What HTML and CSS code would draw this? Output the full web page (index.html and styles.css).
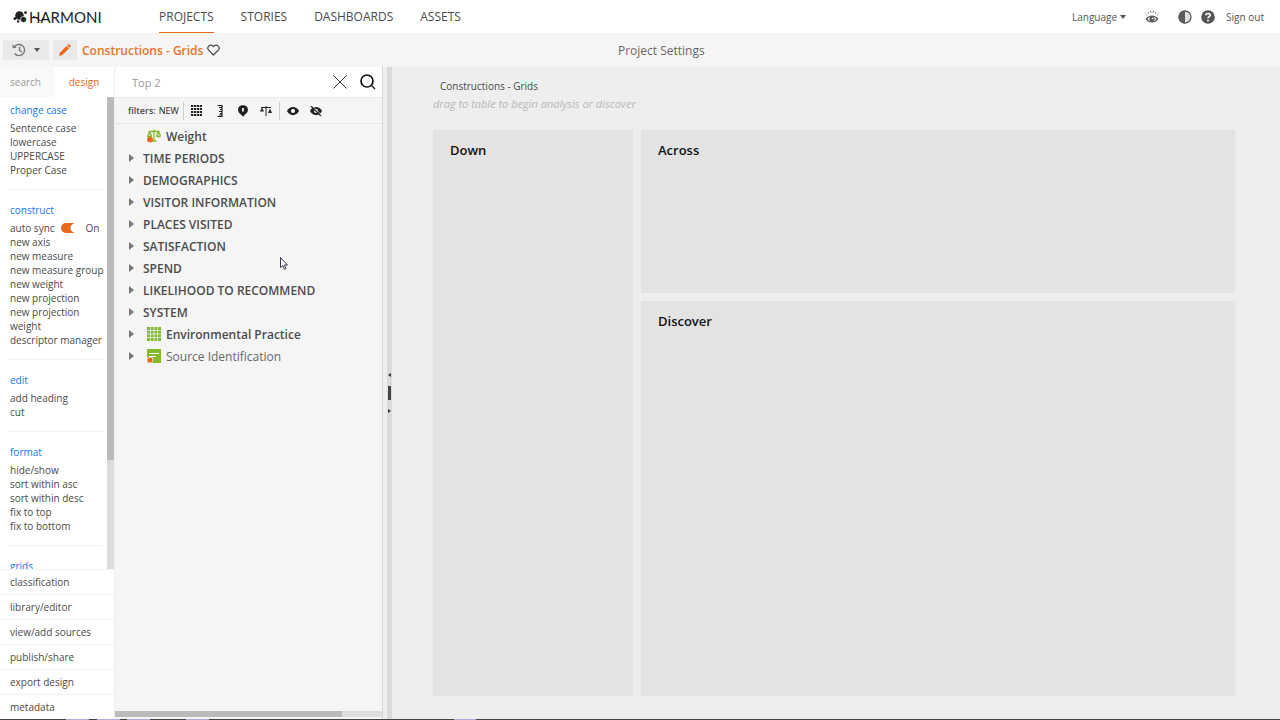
FILE: index.html
```html
<!DOCTYPE html>
<html lang="en">
<head>
  <meta charset="UTF-8">
  <title>Harmoni - Constructions - Grids</title>
  <link rel="stylesheet" href="styles.css">
</head>
<body>
  <header class="topbar">
    <a href="#" class="logo">
      <svg width="16" height="14" viewBox="0 0 16 14">
        <circle cx="6.500" cy="5.500" r="4.300"/>
        <circle cx="10.500" cy="9.500" r="3" stroke="#fff" stroke-width="0.700"/>
        <circle cx="2" cy="8.600" r="1.500"/>
        <circle cx="12.500" cy="2.600" r="1.400"/>
        <circle cx="5.200" cy="11.400" r="1.200"/>
      </svg>
      <span class="logo-text">HARMONI</span>
      <svg class="logo-swash" width="14" height="7" viewBox="0 0 14 7"><path d="M1 1.500C5 1.500 5.500 6 8.500 5.500C10 5 10.500 3.500 12.500 3"/></svg>
    </a>
    <nav class="main-nav">
      <a href="#" class="active">PROJECTS</a>
      <a href="#">STORIES</a>
      <a href="#">DASHBOARDS</a>
      <a href="#">ASSETS</a>
    </nav>
    <div class="user-nav">
      <button class="language">Language <span class="caret"></span></button>
      <button class="icon-btn eye-btn" aria-label="Preview">
        <svg width="14" height="14" viewBox="0 0 14 14">
          <path d="M0.500 9C3.500 4.300 10.500 4.300 13.500 9C10.500 13.700 3.500 13.700 0.500 9Z" fill="#5c5c5c"/>
          <path d="M2.600 9C3.400 7.800 4.300 7.200 5.200 6.900C4 8 4 10 5.200 11.300C4.300 10.900 3.400 10.200 2.600 9ZM11.400 9C10.600 7.800 9.700 7.200 8.800 6.900C10 8 10 10 8.800 11.300C9.700 10.900 10.600 10.200 11.400 9Z" fill="#fff"/>
          <circle cx="7.600" cy="8.300" r="0.900" fill="#fff"/>
          <path d="M0.800 4.200L1.800 5.100M3 2L3.700 3.400M5.600 0.800L5.900 2.500M8.400 0.800L8.100 2.500M11 2L10.300 3.400M13.200 4.200L12.200 5.100" stroke="#5c5c5c" fill="none"/>
        </svg>
      </button>
      <button class="icon-btn" aria-label="Contrast">
        <svg width="14" height="14" viewBox="0 0 14 14"><circle cx="7" cy="7" r="6" fill="#e0e0e0" stroke="#5c5c5c" stroke-width="1.300"/><path d="M7 0.500A6.500 6.500 0 0 0 7 13.500Z" fill="#5c5c5c"/></svg>
      </button>
      <button class="icon-btn help-btn" aria-label="Help">
        <svg width="14" height="14" viewBox="0 0 14 14"><circle cx="7" cy="7" r="6.800" fill="#555"/><path d="M4.800 5.300C4.900 2.800 9.300 2.800 9.200 5.300C9.200 6.700 7 6.700 7 8.300" stroke="#fff" stroke-width="1.600" fill="none"/><circle cx="7" cy="10.500" r="1" fill="#fff"/></svg>
      </button>
      <a href="#" class="signout">Sign out</a>
    </div>
  </header>

  <div class="project-bar">
    <div class="project-left">
      <button class="bar-btn history-btn" aria-label="History">
        <svg width="14" height="14" viewBox="0 0 14 14" fill="none" stroke="#777" stroke-width="1.400"><path d="M2.300 4A5.600 5.600 0 1 1 2.600 10.500M7.600 3.800V7.500L10 9"/><path d="M0.300 1.200L0.800 5.200L4.800 4.700Z" fill="#777" stroke="none"/></svg>
        <span class="caret"></span>
      </button>
      <button class="bar-btn edit-btn" aria-label="Edit">
        <svg width="12" height="12" viewBox="0 0 12 12" fill="#e8681c"><path d="M0 12L0.900 8.700L7.600 2L10 4.400L3.300 11.100Z"/><path d="M8.200 1.400L9.200 0.400Q9.700 0 10.200 0.400L11.600 1.800Q12 2.300 11.600 2.800L10.600 3.800Z"/></svg>
      </button>
      <h1 class="project-name">Constructions - Grids</h1>
      <button class="icon-btn" aria-label="Favourite">
        <svg width="13" height="12" viewBox="0 0 13 12" fill="none" stroke="#444" stroke-width="1.200"><path d="M6.500 11L1.600 6.100C-0.800 3.200 3.500-1 6.500 2.600C9.500-1 13.800 3.200 11.400 6.100Z"/></svg>
      </button>
    </div>
    <a href="#" class="project-settings">Project Settings</a>
  </div>

  <main class="workspace">
    <aside class="sidebar">
      <div class="tabs">
        <button class="tab">search</button>
        <button class="tab active">design</button>
      </div>
      <div class="scroll-area">
        <div class="actions">
          <section>
            <h3>change case</h3>
            <a href="#">Sentence case</a>
            <a href="#">lowercase</a>
            <a href="#">UPPERCASE</a>
            <a href="#">Proper Case</a>
          </section>
          <section>
            <h3>construct</h3>
            <label class="sync">auto sync <input type="checkbox" class="switch" checked> <span>On</span></label>
            <a href="#">new axis</a>
            <a href="#">new measure</a>
            <a href="#">new measure group</a>
            <a href="#">new weight</a>
            <a href="#">new projection</a>
            <a href="#">new projection<br>weight</a>
            <a href="#">descriptor manager</a>
          </section>
          <section>
            <h3>edit</h3>
            <a href="#">add heading</a>
            <a href="#">cut</a>
          </section>
          <section>
            <h3>format</h3>
            <a href="#">hide/show</a>
            <a href="#">sort within asc</a>
            <a href="#">sort within desc</a>
            <a href="#">fix to top</a>
            <a href="#">fix to bottom</a>
          </section>
          <section>
            <h3>grids</h3>
          </section>
        </div>
        <div class="vscroll"><div class="vscroll-thumb"></div></div>
      </div>
      <nav class="side-links">
        <a href="#">classification</a>
        <a href="#">library/editor</a>
        <a href="#">view/add sources</a>
        <a href="#">publish/share</a>
        <a href="#">export design</a>
        <a href="#">metadata</a>
      </nav>
    </aside>

    <section class="tree-panel">
      <div class="search-row">
        <input type="text" class="search-input" value="Top 2" aria-label="Search">
        <button class="icon-btn" aria-label="Clear">
          <svg width="14" height="14" viewBox="0 0 14 14" stroke="#333" fill="none"><path d="M0.500 0.500L13.500 13.500M13.500 0.500L0.500 13.500"/></svg>
        </button>
        <button class="icon-btn" aria-label="Search">
          <svg width="16" height="16" viewBox="0 0 16 16" stroke="#111" fill="none"><circle cx="7" cy="7" r="6" stroke-width="1.700"/><path d="M11.500 11.500L15 15" stroke-width="1.200"/></svg>
        </button>
      </div>
      <div class="filters">
        <span class="filters-label">filters:</span>
        <button class="new-btn">NEW</button>
        <span class="sep"></span>
        <button class="icon-btn" aria-label="Grids">
          <svg width="11" height="11" viewBox="0 0 11 11"><path d="M1 0V11M4 0V11M7 0V11M10 0V11" stroke="#222" stroke-width="2" stroke-dasharray="2 1" fill="none"/><path d="M0 1H11M0 4H11M0 7H11M0 10H11" stroke="#222" stroke-width="0.600" fill="none"/></svg>
        </button>
        <button class="icon-btn" aria-label="Measures">
          <svg width="6" height="12" viewBox="0 0 6 12"><path d="M0.500 0.500H5V11.500H0.500M2 2.500H5M3 4.500H5M2 6.500H5M3 8.500H5M2 10H5" stroke="#222" fill="none" stroke-width="1.200"/></svg>
        </button>
        <button class="icon-btn" aria-label="Places">
          <svg width="10" height="12" viewBox="0 0 10 12"><path d="M5 0.300C11.500 0.300 10.800 8 7.500 9L5 11.700L2.500 9C-0.800 8-1.500 0.300 5 0.300Z" fill="#222"/><path d="M4 3H6V6.500H4Z" fill="#ddd"/></svg>
        </button>
        <button class="icon-btn" aria-label="Weights">
          <svg width="12" height="12" viewBox="0 0 12 12"><path d="M1 2.500H11M6 1V11" stroke="#222" fill="none"/><path d="M0 6.500L2 2.500L4 6.500ZM8 8L10 3.500L12 8Z" fill="#222"/></svg>
        </button>
        <span class="sep"></span>
        <button class="icon-btn" aria-label="Show">
          <svg width="12" height="10" viewBox="0 0 12 10"><path d="M0 5C2.500-0.500 9.500-0.500 12 5C9.500 10.500 2.500 10.500 0 5Z" fill="#222"/><circle cx="6" cy="5" r="2" fill="#fff"/></svg>
        </button>
        <button class="icon-btn" aria-label="Hide">
          <svg width="12" height="10" viewBox="0 0 12 10"><path d="M0 5C2.500-0.500 9.500-0.500 12 5C9.500 10.500 2.500 10.500 0 5Z" fill="#222"/><circle cx="6" cy="5" r="2" fill="#fff"/><path d="M1 0L11 10" stroke="#222" stroke-width="1.400"/><path d="M2.500 0L12 9.500" stroke="#f5f5f5" stroke-width="0.700"/></svg>
        </button>
      </div>
      <ul class="tree">
        <li><span class="arrow hidden"></span>
          <svg class="node-icon" width="14" height="14" viewBox="0 0 14 14"><path d="M1.500 2.500H12.500M7 0.500V12M4.500 12H9.500M2.500 2.500L1 7M2.500 2.500L4.500 7M11.500 2.500L9.500 7M11.500 2.500L13.500 7" stroke="#84b92c" stroke-width="1.300" fill="none"/><path d="M0 6.500H5V8Q2.500 10 0 8ZM9 6.500H14V7.500Q11.500 9.500 9 7.500Z" fill="#84b92c"/><circle cx="3" cy="10.600" r="2.900" fill="#ee6423"/></svg>
          <b>Weight</b></li>
        <li><span class="arrow"></span><b>TIME PERIODS</b></li>
        <li><span class="arrow"></span><b>DEMOGRAPHICS</b></li>
        <li><span class="arrow"></span><b>VISITOR INFORMATION</b></li>
        <li><span class="arrow"></span><b>PLACES VISITED</b></li>
        <li><span class="arrow"></span><b>SATISFACTION</b></li>
        <li><span class="arrow"></span><b>SPEND</b></li>
        <li><span class="arrow"></span><b>LIKELIHOOD TO RECOMMEND</b></li>
        <li><span class="arrow"></span><b>SYSTEM</b></li>
        <li><span class="arrow"></span>
          <svg class="node-icon" width="14" height="14" viewBox="0 0 14 14"><path d="M0 0H14V14H0Z" fill="#84b92c"/><path d="M3.500 0V14M7 0V14M10.500 0V14M0 3.500H14M0 7H14M0 10.500H14" stroke="#f5f5f5" stroke-width="0.800" fill="none"/></svg>
          <b>Environmental Practice</b></li>
        <li><span class="arrow"></span>
          <svg class="node-icon" width="14" height="14" viewBox="0 0 14 14"><path d="M0 0H14V14H0Z" fill="#84b92c"/><path d="M2 4.500H12M2 7.500H9" stroke="#fff" stroke-width="1.200" fill="none"/><circle cx="3" cy="11" r="3.300" fill="#f5f5f5"/><circle cx="3" cy="11" r="2.600" fill="#ee6423"/></svg>
          <span>Source Identification</span></li>
      </ul>
      <div class="hscroll"><div class="hscroll-thumb"></div></div>
    </section>

    <div class="splitter">
      <span class="split-arrow left"></span>
      <span class="split-grip"></span>
      <span class="split-arrow right"></span>
    </div>

    <section class="canvas">
      <h2 class="canvas-title">Constructions - Grids</h2>
      <p class="hint">drag to table to begin analysis or discover</p>
      <div class="zones">
        <div class="zone down">Down</div>
        <div class="zone-column">
          <div class="zone across">Across</div>
          <div class="zone discover">Discover</div>
        </div>
      </div>
    </section>
  </main>
  <div class="bottom-strip"></div>

  <svg class="cursor" width="8" height="13" viewBox="0 0 8 13"><path d="M0.500 0.500V10.500L2.800 8.500L4.500 12.300L6 11.600L4.400 8H7.400Z" fill="#fff" stroke="#223" stroke-width="0.900"/></svg>
</body>
</html>
```
FILE: styles.css
```css
* {
  box-sizing: border-box;
}
body {
  margin: 0;
  height: 100vh;
  display: flex;
  flex-direction: column;
  overflow: hidden;
  font-family: "Open Sans", "Noto Sans", sans-serif;
  font-size: 12px;
  color: #4a4a4a;
  background-color: #eee;
}
h1, h2, h3, p, ul {
  margin: 0;
  padding: 0;
}
a {
  color: inherit;
  text-decoration: none;
}
button {
  margin: 0;
  padding: 0;
  border: none;
  background: none;
  font: inherit;
  color: inherit;
  cursor: pointer;
}
svg {
  display: block;
  flex: none;
}
.icon-btn {
  display: flex;
  align-items: center;
  justify-content: center;
}
.caret {
  border: 3px solid transparent;
  border-top: 4px solid #555;
  border-bottom: none;
}

/* header */
.topbar {
  display: flex;
  flex: none;
  height: 33px;
  background-color: #fff;
}
.logo {
  position: relative;
  display: flex;
  align-items: center;
  width: 146px;
  padding-left: 13px;
  fill: #222;
}
.logo-text {
  font-family: Lato, sans-serif;
  font-size: 15px;
  line-height: 32px;
  color: #222;
}
.logo-swash {
  position: absolute;
  left: 32px;
  top: 15px;
  fill: none;
  stroke: #222;
}
.main-nav {
  display: flex;
  flex: 1;
  gap: 27px;
  padding-left: 13px;
}
.main-nav a {
  font-size: 12px;
  font-weight: 500;
  line-height: 33px;
  height: 33px;
}
.main-nav a.active {
  border-bottom: 1px solid #e8681c;
}
.user-nav {
  display: flex;
  align-items: center;
  padding-right: 16px;
  font-size: 10px;
  font-weight: 500;
  color: #555;
}
.language {
  display: flex;
  align-items: center;
  gap: 3px;
}
.eye-btn {
  margin: 0 19px;
}
.help-btn {
  margin: 0 11px 0 9px;
}

/* project bar */
.project-bar {
  display: flex;
  flex: none;
  align-items: center;
  height: 34px;
  padding-left: 3px;
  background-color: #f5f5f5;
}
.project-left {
  display: flex;
  flex: none;
  align-items: center;
  gap: 4px;
  width: 48%;
}
.bar-btn {
  display: flex;
  align-items: center;
  justify-content: center;
  gap: 8px;
  height: 20px;
  background-color: #e9e9e9;
}
.history-btn {
  width: 46px;
}
.edit-btn {
  width: 24px;
  margin-right: 1px;
}
.project-name {
  font-size: 12px;
  font-weight: 600;
  color: #e8732c;
}
.project-settings {
  padding-left: 2px;
  font-size: 12px;
  font-weight: 500;
  color: #666;
}

/* left sidebar */
.workspace {
  display: flex;
  flex: 1;
  min-height: 0;
}
.sidebar {
  display: flex;
  flex: none;
  flex-direction: column;
  width: 114px;
  background-color: #fff;
  font-size: 10px;
}
.tabs {
  display: flex;
  height: 30px;
}
.tab {
  width: 54px;
  padding-right: 3px;
  color: #999;
  background-color: #f9f9f9;
}
.tab.active {
  flex: 1;
  padding: 0;
  color: #e8681c;
  background-color: #fff;
}
.scroll-area {
  display: flex;
  flex: 1;
  min-height: 0;
}
.actions {
  flex: 1;
  overflow: hidden;
  padding: 4px 4px 0 8px;
}
.actions section {
  padding: 0 2px 12px;
  margin-bottom: 11px;
  border-bottom: 1px solid #f0f0f0;
}
.actions h3 {
  margin-bottom: 2px;
  font-size: 10px;
  font-weight: 400;
  line-height: 18px;
  color: #0f78f0;
}
.actions a {
  display: block;
  line-height: 14px;
  white-space: nowrap;
}
.sync {
  display: flex;
  align-items: center;
  gap: 6px;
  line-height: 14px;
  white-space: nowrap;
}
.switch {
  appearance: none;
  flex: none;
  width: 19px;
  height: 10px;
  margin: 0;
  border-radius: 5px;
  background: radial-gradient(circle at 14px 5px, #fff 4px, transparent 5px), linear-gradient(to right, #e8681c 13px, #fff 13px);
}
.vscroll {
  width: 7px;
  background-color: #dcdcdc;
}
.vscroll-thumb {
  height: 77%;
  background-color: #bbb;
}
.side-links a {
  display: block;
  height: 25px;
  padding-left: 10px;
  line-height: 24px;
  border-top: 1px solid #f2f2f2;
}

/* tree */
.tree-panel {
  display: flex;
  flex: none;
  flex-direction: column;
  width: 269px;
  background-color: #f5f5f5;
  border-right: 1px solid #d8d8d8;
  border-left: 1px solid #eee;
}
.search-row {
  display: flex;
  align-items: center;
  gap: 13px;
  height: 31px;
  padding: 0 6px 0 17px;
  background-color: #fff;
  border-bottom: 1px solid #eaeaea;
}
.search-input {
  flex: 1;
  min-width: 0;
  padding: 0;
  border: none;
  outline: none;
  font: inherit;
  font-size: 11px;
  color: #999;
}
.filters {
  display: flex;
  align-items: center;
  height: 26px;
  gap: 11px;
  padding-left: 13px;
  font-size: 9px;
  border-bottom: 1px solid #e6e6e6;
}
.filters .icon-btn {
  width: 12px;
}
.filters-label {
  margin-right: -8px;
  font-weight: 600;
}
.new-btn {
  margin-right: -3px;
  color: #222;
}
.sep {
  width: 1px;
  height: 18px;
  margin: 0 -4px;
  background-color: #ccc;
}
.tree {
  flex: 1;
  padding: 1px 0 0 14px;
  list-style: none;
  color: #4c4c4c;
}
.tree li {
  display: flex;
  align-items: center;
  height: 22px;
  font-size: 12px;
  white-space: nowrap;
}
.tree b {
  font-weight: 600;
}
.tree li > span {
  color: #666;
}
.arrow {
  height: 8px;
  margin-right: 9px;
  border: 4px solid transparent;
  border-left: 5px solid #777;
  border-right: none;
}
.arrow.hidden {
  visibility: hidden;
}
.node-icon {
  margin: 0 5px 0 4px;
}
.hscroll {
  height: 6px;
  margin-bottom: 2px;
  background-color: #dedede;
}
.hscroll-thumb {
  width: 85%;
  height: 6px;
  background-color: #bbb;
}

/* splitter */
.splitter {
  display: flex;
  flex: none;
  flex-direction: column;
  align-items: center;
  justify-content: center;
  gap: 9px;
  width: 5px;
  margin-left: 4px;
  background-color: #dadada;
}
.split-arrow {
  border: 2px solid transparent;
}
.split-arrow.left {
  border-right: 3px solid #333;
  border-left: none;
}
.split-arrow.right {
  border-left: 3px solid #333;
  border-right: none;
}
.split-grip {
  width: 3px;
  height: 14px;
  background-color: #444;
}

/* canvas */
.canvas {
  display: flex;
  flex: 1;
  flex-direction: column;
  padding: 10px 45px 23px 41px;
}
.canvas-title {
  padding-left: 7px;
  font-size: 10px;
  font-weight: 400;
  line-height: 18px;
}
.hint {
  font-size: 11px;
  font-style: italic;
  line-height: 18px;
  color: #b8b8b8;
}
.zones {
  display: flex;
  flex: 1;
  gap: 8px;
  margin-top: 17px;
}
.zone {
  padding: 11px 17px;
  font-size: 13px;
  font-weight: 600;
  line-height: 18px;
  color: #111;
  background-color: #e3e3e3;
}
.down {
  width: 200px;
}
.zone-column {
  display: flex;
  flex: 1;
  flex-direction: column;
  gap: 8px;
}
.across {
  height: 163px;
}
.discover {
  flex: 1;
}

.bottom-strip {
  flex: none;
  height: 1px;
  background: linear-gradient(to right, #444 66px, #b8a8dc 66px, #b8a8dc 89px, #444 89px, #444 97px, #b8a8dc 97px, #b8a8dc 120px, #444 120px, #444 127px, #b8a8dc 127px, #b8a8dc 150px, #444 150px, #444 186px, #b8a8dc 186px, #b8a8dc 209px, #444 209px, #444 454px, #b8a8dc 454px, #b8a8dc 476px, #444 476px);
}
.cursor {
  position: absolute;
  left: 280px;
  top: 257px;
}
```
